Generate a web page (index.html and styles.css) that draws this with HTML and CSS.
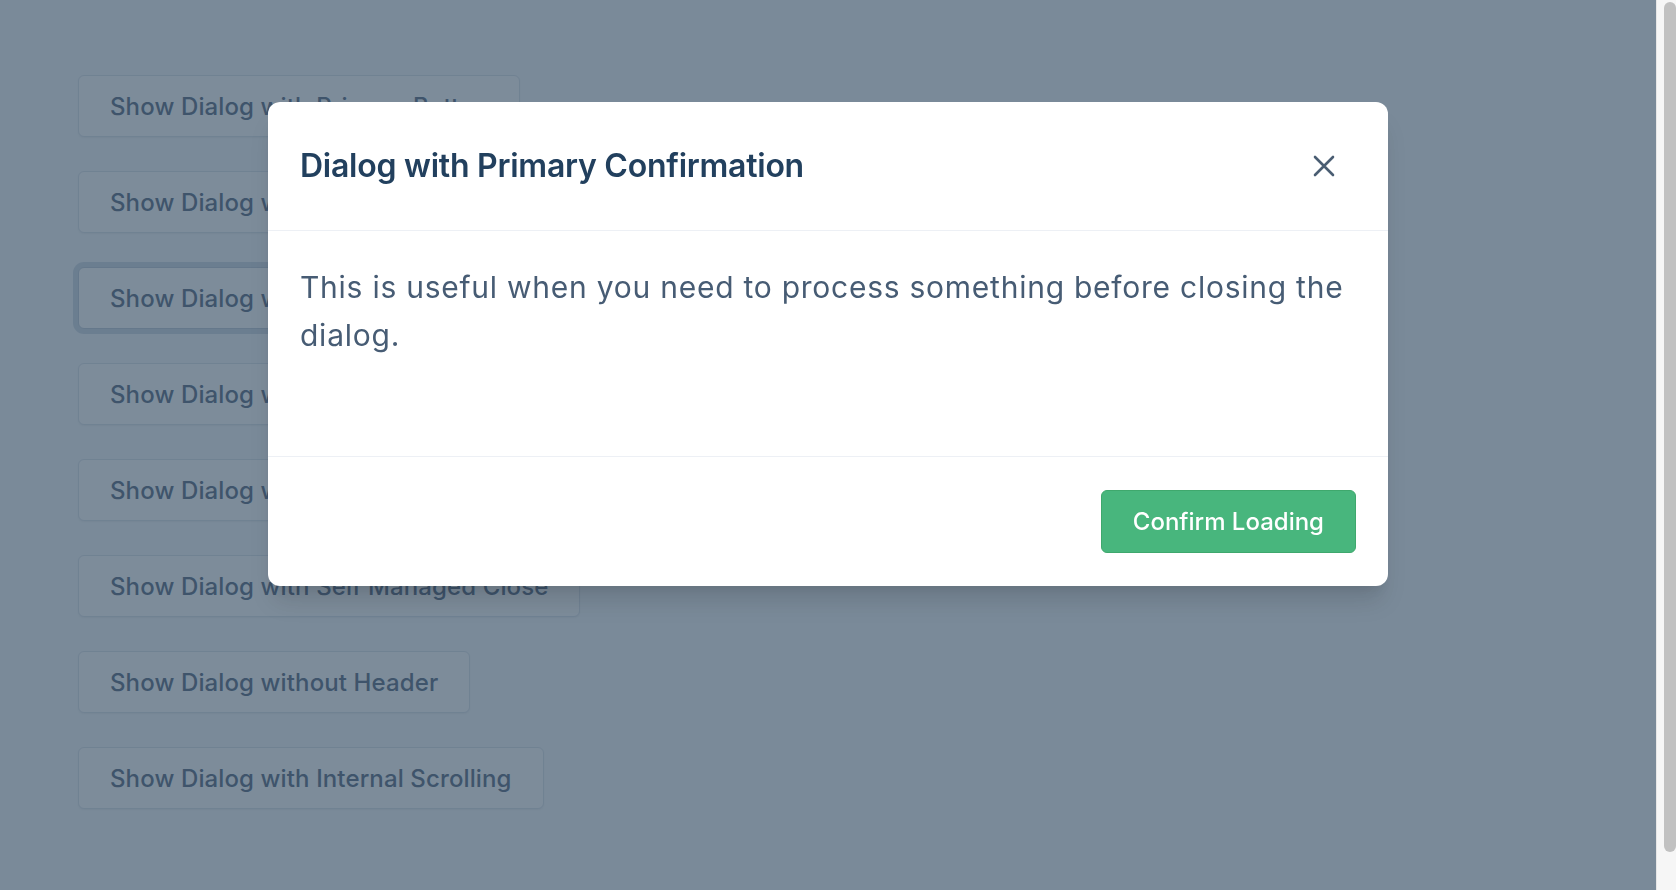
FILE: index.html
```html
<!DOCTYPE html>
<html lang="en">
<head>
<meta charset="utf-8">
<title>Dialog demo</title>
<link rel="stylesheet" href="styles.css">
</head>
<body>
<main class="demo">
  <button class="demo-btn" type="button">Show Dialog with Primary Button</button>
  <button class="demo-btn" type="button">Show Dialog with Danger Button</button>
  <button class="demo-btn is-focused" type="button">Show Dialog with Primary Confirmation</button>
  <button class="demo-btn" type="button">Show Dialog with Danger Confirmation</button>
  <button class="demo-btn" type="button">Show Dialog with Custom Footer</button>
  <button class="demo-btn" type="button">Show Dialog with Self Managed Close</button>
  <button class="demo-btn" type="button">Show Dialog without Header</button>
  <button class="demo-btn" type="button">Show Dialog with Internal Scrolling</button>
</main>

<div class="scrollbar" aria-hidden="true"><div class="scrollbar-thumb"></div></div>

<div class="overlay">
  <div class="dialog" role="dialog">
    <header class="dialog-header">
      <h2 class="dialog-title">Dialog with Primary Confirmation</h2>
      <button class="dialog-close" type="button" aria-label="Close">
        <svg width="22" height="22" viewBox="0 0 22 22" fill="none" stroke="currentColor" stroke-width="2.6" stroke-linecap="round">
          <path d="M2 2 L20 20 M20 2 L2 20"/>
        </svg>
      </button>
    </header>
    <div class="dialog-body">
      <p>This is useful when you need to process something before closing the dialog.</p>
    </div>
    <footer class="dialog-footer">
      <button class="btn-primary" type="button">Confirm Loading</button>
    </footer>
  </div>
</div>
</body>
</html>
```

FILE: styles.css
```css
body {
  margin: 0;
  height: 100vh;
  overflow: hidden;
  display: flex;
  background: #f7fafc;
  font-family: Inter, "Noto Sans", "Liberation Sans", sans-serif;
}

.demo {
  flex: 1;
  display: flex;
  flex-direction: column;
  align-items: flex-start;
  gap: 34px;
  padding: 75px 0 0 78px;
}

.scrollbar {
  flex: none;
  width: 20px;
  box-sizing: border-box;
  padding: 2px 0 38px 7px;
  background: #f6f6f6;
  border-left: 1px solid #e6e6e6;
}

.scrollbar-thumb {
  height: 100%;
  background: #c1c1c1;
  border-radius: 6px;
}

.demo-btn {
  height: 62px;
  padding: 0 31px;
  border: 1px solid #dfe5ec;
  border-radius: 6px;
  background: #ffffff;
  color: #64748b;
  font-family: inherit;
  font-size: 24px;
  font-weight: 500;
  letter-spacing: 0.12px;
  box-shadow: 0 1px 2px rgba(0, 0, 0, 0.05);
}

.demo-btn.is-focused {
  border-color: #c3cdd9;
  box-shadow: 0 0 0 5px #d3dce6;
}

.overlay {
  position: fixed;
  top: 0;
  left: 0;
  bottom: 0;
  right: 20px;
  background: rgba(39, 63, 87, 0.6);
  display: flex;
  justify-content: center;
  align-items: flex-start;
  padding-top: 102px;
}

.dialog {
  width: 1120px;
  background: #ffffff;
  border-radius: 12px;
  box-shadow: 0 20px 25px -5px rgba(0, 0, 0, 0.12), 0 10px 10px -5px rgba(0, 0, 0, 0.05);
}

.dialog-header {
  display: flex;
  align-items: center;
  justify-content: space-between;
  padding: 32px;
  border-bottom: 1px solid #edf0f5;
}

.dialog-title {
  margin: 0;
  font-size: 32px;
  line-height: 40px;
  font-weight: 600;
  letter-spacing: -0.25px;
  color: #22405e;
}

.dialog-close {
  width: 64px;
  height: 64px;
  padding: 0;
  border: 0;
  background: transparent;
  color: #4a5d72;
  display: flex;
  align-items: center;
  justify-content: center;
}

.dialog-body {
  padding: 32px 32px 97px;
}

.dialog-body p {
  margin: 0;
  font-size: 30px;
  line-height: 48px;
  letter-spacing: 0.75px;
  color: #475c74;
}

.dialog-footer {
  display: flex;
  justify-content: flex-end;
  padding: 33px 32px;
  border-top: 1px solid #edf0f5;
}

.btn-primary {
  height: 63px;
  padding: 0 31px;
  border: 1px solid #3fa86d;
  border-radius: 6px;
  background: #48b67d;
  color: #ffffff;
  font-family: inherit;
  font-size: 24px;
  font-weight: 500;
}
```
